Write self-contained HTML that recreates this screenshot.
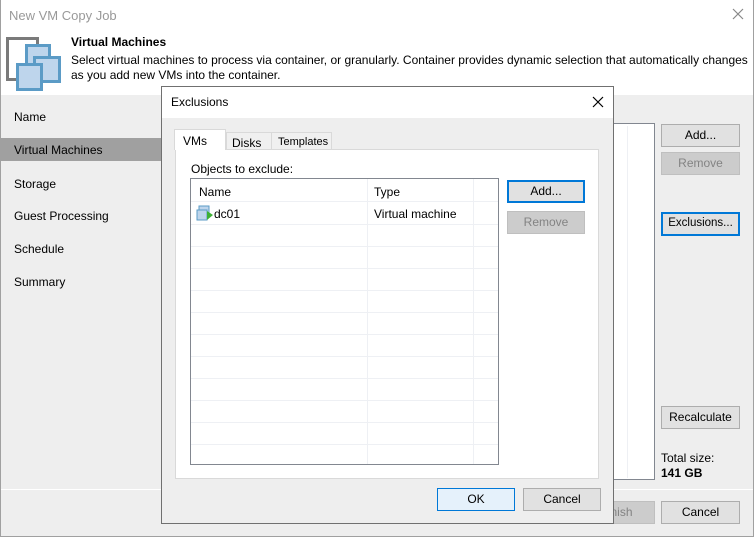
<!DOCTYPE html>
<html><head><style>
*{box-sizing:border-box;margin:0;padding:0}
body{width:754px;height:537px;overflow:hidden;background:#eee;font-family:"Liberation Sans",sans-serif;font-size:12px;color:#000;position:relative}
.a{position:absolute}
.btn{position:absolute;background:#e1e1e1;border:1px solid #adadad;text-align:center;line-height:20px;font-size:12px}
.dis{background:#ccc;border-color:#bfbfbf;color:#838383}
.foc{border:2px solid #0078d7;line-height:18px}
.nav{position:absolute;left:14px;font-size:12px}
</style></head><body>
<div class="a" style="left:0;top:0;width:754px;height:537px;border:1px solid #a0a0a0;border-top:none"></div>
<div class="a" style="left:1px;top:0;width:752px;height:95px;background:#fff"></div>
<div class="a" style="left:9px;top:8px;color:#999;font-size:13px">New VM Copy Job</div>
<svg class="a" style="left:732px;top:8px" width="12" height="12"><path d="M1 1L11 11M11 1L1 11" stroke="#888" stroke-width="1.2"/></svg>
<svg class="a" style="left:0;top:30px" width="64" height="64">
<rect x="7.5" y="8.5" width="30" height="41" fill="none" stroke="#7a7a7a" stroke-width="3"/>
<rect x="14" y="13" width="22" height="20" fill="#fff"/>
<rect x="26.5" y="15.5" width="23" height="22" fill="#bed5ec" stroke="#5b9bc6" stroke-width="3"/>
<rect x="34.5" y="27.5" width="25" height="24" fill="#bed5ec" stroke="#5b9bc6" stroke-width="3"/>
<rect x="17.5" y="34.5" width="24" height="25" fill="#bed5ec" stroke="#5b9bc6" stroke-width="3"/>
</svg>
<div class="a" style="left:71px;top:35px;font-weight:bold;font-size:12px">Virtual Machines</div>
<div class="a" style="left:71px;top:53px;font-size:12px;line-height:15px;width:680px">Select virtual machines to process via container, or granularly. Container provides dynamic selection that automatically changes as you add new VMs into the container.</div>
<div class="nav" style="top:110px">Name</div>
<div class="a" style="left:1px;top:138px;width:160px;height:23px;background:#a0a0a0"></div>
<div class="nav" style="top:143px">Virtual Machines</div>
<div class="nav" style="top:177px">Storage</div>
<div class="nav" style="top:209px">Guest Processing</div>
<div class="nav" style="top:242px">Schedule</div>
<div class="nav" style="top:275px">Summary</div>
<div class="a" style="left:1px;top:489px;width:752px;height:1px;background:#fff"></div>
<div class="a" style="left:560px;top:123px;width:95px;height:357px;background:#fff;border:1px solid #828790"></div>
<div class="a" style="left:627px;top:126px;width:1px;height:352px;background:#eef0f4"></div>
<div class="btn" style="left:661px;top:124px;width:79px;height:23px">Add...</div>
<div class="btn dis" style="left:661px;top:152px;width:79px;height:23px">Remove</div>
<div class="btn foc" style="left:661px;top:212px;width:79px;height:24px;font-size:11.5px;line-height:19px">Exclusions...</div>
<div class="btn" style="left:661px;top:406px;width:79px;height:23px">Recalculate</div>
<div class="a" style="left:661px;top:451px">Total size:</div>
<div class="a" style="left:661px;top:466px;font-weight:bold">141 GB</div>
<div class="btn dis" style="left:578px;top:501px;width:77px;height:23px">Finish</div>
<div class="btn" style="left:661px;top:501px;width:79px;height:23px">Cancel</div>

<div class="a" style="left:161px;top:86px;width:453px;height:438px;background:#eee;border:1px solid #707070">
<div class="a" style="left:0;top:0;width:451px;height:31px;background:#fff"></div>
<div class="a" style="left:9px;top:8px;font-size:12px">Exclusions</div>
<svg class="a" style="left:430px;top:9px" width="12" height="12"><path d="M1 1L11 11M11 1L1 11" stroke="#000" stroke-width="1.2"/></svg>
<div class="a" style="left:13px;top:62px;width:424px;height:330px;background:#fff;border:1px solid #d9d9d9"></div>
<div class="a" style="left:12px;top:42px;width:52px;height:21px;background:#fff;border:1px solid #d9d9d9;border-bottom:none;padding:4px 0 0 8px">VMs</div>
<div class="a" style="left:64px;top:45px;width:46px;height:18px;background:#f0f0f0;border:1px solid #d9d9d9;padding:3px 0 0 5px">Disks</div>
<div class="a" style="left:109px;top:45px;width:61px;height:18px;background:#f0f0f0;border:1px solid #d9d9d9;padding:3px 0 0 6px;font-size:11px">Templates</div>
<div class="a" style="left:29px;top:75px">Objects to exclude:</div>
<div class="a" style="left:28px;top:91px;width:309px;height:287px;background:#fff;border:1px solid #828790;overflow:hidden;
background-image:linear-gradient(#eef0f4 1px,transparent 1px);background-size:100% 22px;background-position:0 45px">
<div class="a" style="left:0;top:0;width:307px;height:44px;background:#fff"></div>
<div class="a" style="left:0;top:22px;width:307px;height:1px;background:#eef0f4"></div>
<div class="a" style="left:176px;top:0;width:1px;height:287px;background:#eef0f4"></div>
<div class="a" style="left:282px;top:0;width:1px;height:287px;background:#eef0f4"></div>
<div class="a" style="left:8px;top:6px">Name</div>
<div class="a" style="left:183px;top:6px">Type</div>
<svg class="a" style="left:5px;top:25px" width="18" height="18"><rect x="3" y="2" width="10" height="9" fill="#bed5ec" stroke="#5b9bc6"/><rect x="1" y="6" width="10" height="10" fill="#bed5ec" stroke="#5b9bc6"/><polygon points="11,7 17,11 11,16" fill="#3cb034"/></svg>
<div class="a" style="left:23px;top:28px">dc01</div>
<div class="a" style="left:183px;top:28px">Virtual machine</div>
</div>
<div class="btn foc" style="left:345px;top:93px;width:78px;height:23px">Add...</div>
<div class="btn dis" style="left:345px;top:124px;width:78px;height:23px">Remove</div>
<div class="btn" style="left:275px;top:401px;width:78px;height:23px;background:#e5f1fb;border-color:#0078d7">OK</div>
<div class="btn" style="left:361px;top:401px;width:78px;height:23px">Cancel</div>
</div>
</body></html>
